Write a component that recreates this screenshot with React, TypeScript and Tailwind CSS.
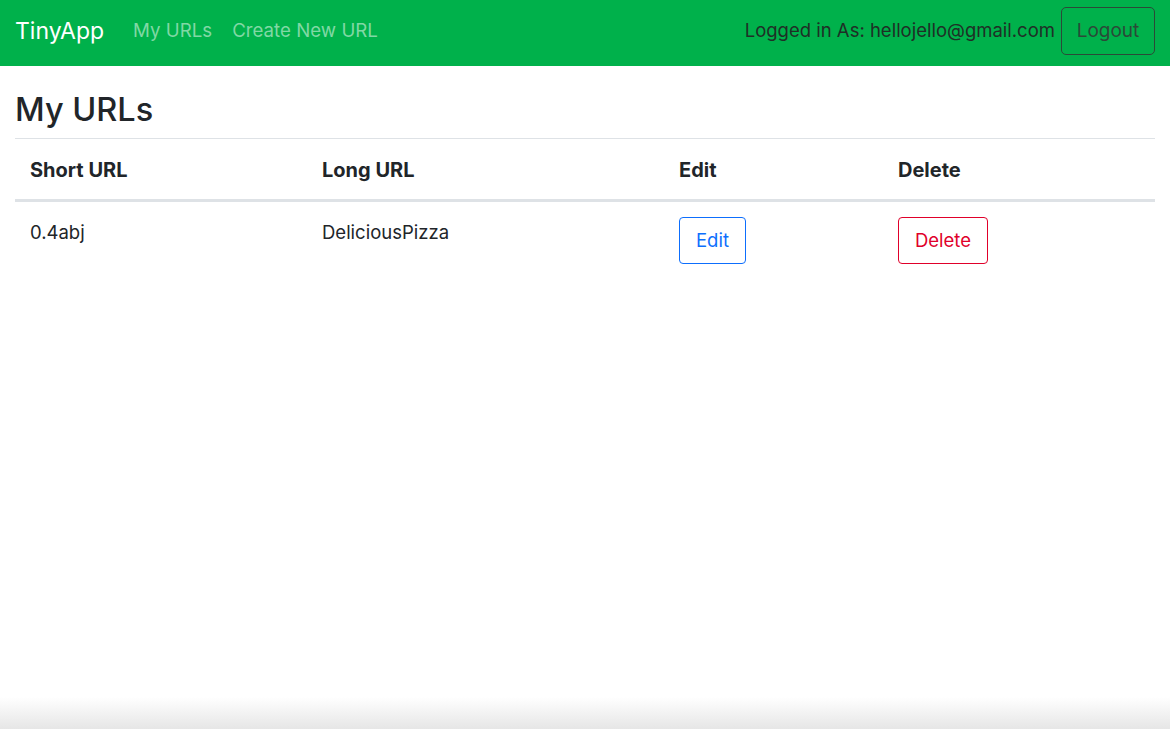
import React from 'react';

const urls = [{ short: '0.4abj', long: 'DeliciousPizza' }];

export default function App() {
  return (
    <div
      className="flex h-[729px] flex-col bg-white text-[#212529]"
      style={{ fontFamily: 'Inter, "Noto Sans", sans-serif' }}
    >
      {/* Navbar */}
      <nav className="flex h-[66px] items-center bg-[#00b14b] pb-[4px] pl-[15px] pr-[15px]">
        <span className="mr-[29px] text-[23px] text-white">TinyApp</span>
        <a className="mr-[20px] text-[18.7px] text-[#80d8a5]">My URLs</a>
        <a className="text-[18.7px] text-[#80d8a5]">Create New URL</a>
        <div className="ml-auto flex items-center">
          <span className="text-[18.5px] text-[#1f2f26]">Logged in As: hellojello@gmail.com</span>
          <button className="ml-[6px] h-[48px] w-[94px] rounded-[5px] border border-[#2b4a38] text-[19px] text-[#2b4a38]">
            Logout
          </button>
        </div>
      </nav>

      <main className="px-[15px]">
        <h1 className="pt-[24px] pb-[8px] text-[32.5px] leading-[40px] font-medium">My URLs</h1>
        <table className="w-full border-t border-[#dee2e6] text-left text-[18.5px]">
          <thead>
            <tr className="border-b-[3px] border-[#dee2e6]">
              <th className="h-[62px] w-[292px] px-[15px] pt-[1px] text-[20px] font-bold">Short URL</th>
              <th className="w-[357px] px-[15px] pt-[1px] text-[20px] font-bold">Long URL</th>
              <th className="w-[219px] px-[15px] pt-[1px] text-[20px] font-bold">Edit</th>
              <th className="px-[15px] pt-[1px] text-[20px] font-bold">Delete</th>
            </tr>
          </thead>
          <tbody>
            {urls.map((u) => (
              <tr key={u.short}>
                <td className="px-[15px] pt-[17px] align-top">{u.short}</td>
                <td className="px-[15px] pt-[17px] align-top">{u.long}</td>
                <td className="px-[15px] pt-[15px] pb-[15px] align-top">
                  <button className="h-[47px] w-[67px] rounded-[4px] border border-[#0d6efd] text-[18.5px] text-[#0d6efd]">
                    Edit
                  </button>
                </td>
                <td className="px-[15px] pt-[15px] align-top">
                  <button className="h-[47px] w-[90px] rounded-[4px] border border-[#e0002a] text-[18.5px] text-[#e0002a]">
                    Delete
                  </button>
                </td>
              </tr>
            ))}
          </tbody>
        </table>
      </main>

      <div className="flex-1" />
      <div className="h-[32px] bg-gradient-to-b from-white to-[#e6e6e6]" />
    </div>
  );
}
